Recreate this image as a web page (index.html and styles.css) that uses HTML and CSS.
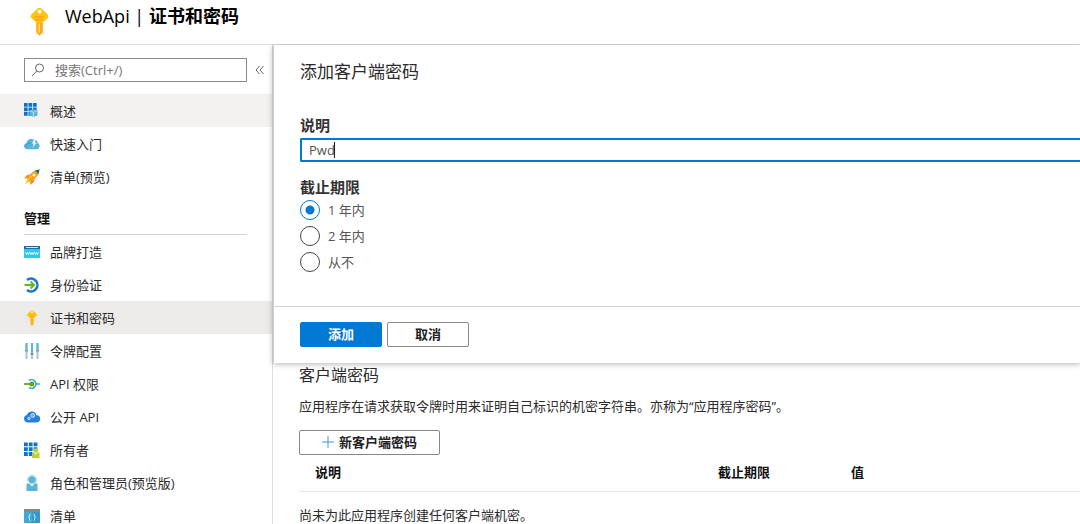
FILE: index.html
```html
<!DOCTYPE html>
<html lang="zh-CN">
	<head>
		<meta charset="utf-8">
		<title>WebApi | 证书和密码</title>
		<link rel="stylesheet" href="styles.css">
	</head>
	<body>
		<header class="header">
			<svg class="header-icon" viewBox="0 0 20 30">
				<path d="M8 1.2Q10-.4 12 1.2L18.600 7.500Q20 9.500 18.600 11.500L13.500 16V26.500L10 30 6.500 26.500V16L1.400 11.500Q0 9.500 1.400 7.500Z" fill="#ffc414"/>
				<path d="M7 16h6v10.500L10 29.500l-3-3z" fill="#ffa91c"/>
				<path d="M9 17h1.500v10H9z" fill="#ffe06a"/>
				<path d="M5 9.500h10v1.500H5zM6 12.500h8V14H6z" fill="#ff9f1c"/>
				<circle cx="10" cy="4.500" r="2" fill="#fff"/>
			</svg>
			<h1>WebApi | <b>证书和密码</b></h1>
		</header>
		<div class="layout">
			<nav class="sidebar">
				<div class="search-row">
					<div class="search">
						<svg viewBox="0 0 14 14"><circle cx="8.500" cy="5" r="4" fill="none" stroke="#666"/><path d="M5.700 8 1 13" stroke="#666"/></svg>
						<input type="text" placeholder="搜索(Ctrl+/)" aria-label="搜索">
					</div>
					<button class="collapse" aria-label="折叠">
						<svg viewBox="0 0 9 10"><path d="M4.500 1 1 5l3.500 4M8.500 1 5 5l3.500 4" fill="none" stroke="#666"/></svg>
					</button>
				</div>
				<a class="item hover" href="#">
					<svg viewBox="0 0 16 16">
						<path d="M0 0h3.700v3.700H0zM4.500 0h3.700v3.700H4.500zM9 0h3.700v3.700H9zM0 4.500h3.700v3.700H0zM4.500 4.500h3.700v3.700H4.500zM9 4.500h3.700v3.700H9zM0 9h3.700v3.700H0zM4.500 9h3.700v3.700H4.500z" fill="#0f72c9"/>
						<path d="m9.500 6 4 1.500v5l-4 1.500-4-2V7.500z" fill="#59b4d9"/>
						<path d="m6 8 3.500 1.300V14M9.500 9.300l4-1.500" fill="none" stroke="#b8e2f2"/>
					</svg>
					概述
				</a>
				<a class="item" href="#">
					<svg viewBox="0 0 16 16">
						<path d="M3.200 13.200a3.200 3.200 0 0 1-.7-6.300A4.300 4.300 0 0 1 9 3.500a3.500 3.500 0 0 1 4.500 3.500 3.200 3.200 0 0 1-.5 6.200z" fill="#59b4d9"/>
						<path d="M1.500 11.500C1 8 5 6 7.500 8.500" fill="none" stroke="#3b94bf"/>
						<path d="m10.500 3-2.500 4.500h2L8.500 12l4-5.500h-2l1.500-3.500z" fill="#fff"/>
					</svg>
					快速入门
				</a>
				<a class="item" href="#">
					<svg viewBox="0 0 16 16">
						<path d="M6.500 5.500 3 6 0 9.500l4-.5zM10.500 9.500 10 13l-4 3 .5-4z" fill="#f78d1e"/>
						<path d="M3.500 10 1 15l5-2.500z" fill="#fcd116"/>
						<path d="M11 1.500 15.500.5l-1 4.500Q12 10 6 13L3 10Q6 4 11 1.500Z" fill="#ff9c1a"/>
						<path d="M11 1.500 15.500.5l-1 4.500z" fill="#0f6a9e"/>
						<circle cx="10" cy="6" r="1.500" fill="#fff"/>
						<path d="m4 11 4-4" stroke="#ffd54a"/>
					</svg>
					清单(预览)
				</a>
				<h2 class="group">管理</h2>
				<a class="item" href="#">
					<svg viewBox="0 0 16 16">
						<path d="M0 2h16v12H0z" fill="#32c8ee"/>
						<path d="M0 2h16v3H0z" fill="#1b66b5"/>
						<path d="M2 3.500h12" stroke="#d4e8f8"/>
						<path d="m1.500 8 1 2.500 1-2 1 2 1-2.500m.5 0 1 2.500 1-2 1 2L10 8m.5 0 1 2.500 1-2 1 2 1-2.500" fill="none" stroke="#fff" stroke-width=".8"/>
					</svg>
					品牌打造
				</a>
				<a class="item" href="#">
					<svg viewBox="0 0 16 16">
						<path d="M3 3A6.400 6.400 0 1 1 3 13" fill="none" stroke="#1879cf" stroke-width="2.600"/>
						<path d="M.5 8H10M6.500 4.500 10 8l-3.500 3.500" fill="none" stroke="#66b71b" stroke-width="2"/>
					</svg>
					身份验证
				</a>
				<a class="item active" href="#">
					<svg viewBox="0 0 16 16">
						<path d="M7 .5Q8-.2 9 .5l3.500 3.200q.8 1 0 2L9.700 8.200V14L8 16l-1.700-2V8.200L3.500 5.700q-.8-1 0-2z" fill="#ffc30f"/>
						<path d="M7 8.500h2V14l-1 1-1-1z" fill="#ffae17"/>
						<path d="M5.500 5h5M6 6.800h4" stroke="#ffa51c"/>
						<circle cx="8" cy="2.300" r="1" fill="#fff"/>
					</svg>
					证书和密码
				</a>
				<a class="item" href="#">
					<svg viewBox="0 0 16 16">
						<path d="M2.500 0v16M8 0v16M13.500 0v16" stroke="#a9c6d3" stroke-width="2"/>
						<path d="M2.500 0v6M8 0v10M13.500 0v6" stroke="#59b4d9" stroke-width="2"/>
						<path d="M1 7.500h3M6.500 11h3M12 7.500h3" stroke="#8b9aa2" stroke-width="2"/>
					</svg>
					令牌配置
				</a>
				<a class="item" href="#">
					<svg viewBox="0 0 16 16">
						<path d="M5 4.500A4.300 4.300 0 1 1 5 11.500M12.500 8H16" fill="none" stroke="#3dacd6" stroke-width="1.600"/>
						<path d="M0 8h7" stroke="#7ab51d" stroke-width="2"/>
						<circle cx="7.800" cy="8" r="2.500" fill="#6ba514"/>
					</svg>
					API 权限
				</a>
				<a class="item" href="#">
					<svg viewBox="0 0 16 16">
						<path d="M3.800 13.500a3.800 3.800 0 0 1-.8-7.500A5 5 0 0 1 12.600 6.200 3.600 3.600 0 0 1 12.500 13.500z" fill="#2480dc"/>
						<circle cx="8.800" cy="6.400" r="1.900" fill="#65aaf0" stroke="#d8ebff"/>
						<circle cx="5" cy="9.400" r="1.200" fill="#4794e6" stroke="#d8ebff"/>
					</svg>
					公开 API
				</a>
				<a class="item" href="#">
					<svg viewBox="0 0 16 16">
						<path d="M0 .5h3.800v3.800H0zM4.800.5h3.800v3.800H4.800zM9.600.5h3.800v3.800H9.600zM0 5.300h3.800v3.800H0zM4.800 5.300h3.800v3.800H4.800zM9.600 5.300h3.800v3.800H9.600zM0 10.100h3.800v3.800H0zM4.800 10.100h3.800v3.800H4.800z" fill="#0f72c9"/>
						<path d="M8 10.500h7.500V16H8z" fill="#b8d432"/>
						<path d="m10 10.500 1.800 2 1.800-2z" fill="#fff"/>
						<circle cx="11.800" cy="8.500" r="2.300" fill="#b8d432"/>
					</svg>
					所有者
				</a>
				<a class="item" href="#">
					<svg viewBox="0 0 16 16">
						<path d="M2.500 8.500h11V16h-11z" fill="#59b4d9"/>
						<path d="m5.500 8.500 2.500 3 2.500-3z" fill="#fff"/>
						<circle cx="8" cy="4.800" r="3.600" fill="#59b4d9"/>
						<path d="M3.700 6V4.500a4.300 4.300 0 0 1 8.600 0V6q0 2-3 2" fill="none" stroke="#8acbe4"/>
					</svg>
					角色和管理员(预览版)
				</a>
				<a class="item" href="#">
					<svg viewBox="0 0 16 16">
						<path d="M0 1h16v14H0z" fill="#3fa9d2"/>
						<path d="M8 4h8v11H8z" fill="#3799c7"/>
						<path d="M0 1h16v3H0z" fill="#7a8b94"/>
						<path d="M6.500 6Q5 6 5.500 8q0 1-1 1.200 1 .2 1 1.300-.5 2 1 2M9.500 6q1.500 0 1 2 0 1 1 1.200-1 .2-1 1.300.5 2-1 2" fill="none" stroke="#d8f1fb" stroke-width=".9"/>
					</svg>
					清单
				</a>
			</nav>
			<main class="content">
				<form class="pane">
					<div class="pane-body">
						<h2>添加客户端密码</h2>
						<label class="label" for="desc">说明</label>
						<div class="field">
							<input type="text" id="desc" value="Pwd">
							<span class="caret"></span>
						</div>
						<fieldset>
							<legend class="label">截止期限</legend>
							<label class="radio"><input type="radio" name="expires" checked>1 年内</label>
							<label class="radio"><input type="radio" name="expires">2 年内</label>
							<label class="radio"><input type="radio" name="expires">从不</label>
						</fieldset>
					</div>
					<div class="pane-footer">
						<button type="button" class="btn primary">添加</button>
						<button type="button" class="btn">取消</button>
					</div>
				</form>
				<section class="secrets">
					<h2>客户端密码</h2>
					<p>应用程序在请求获取令牌时用来证明自己标识的机密字符串。亦称为“应用程序密码”。</p>
					<button type="button" class="btn add">
						<svg viewBox="0 0 12 12"><path d="M6 0v12M0 6h12" stroke="#3a9fd0"/></svg>
						新客户端密码
					</button>
					<table>
						<thead>
							<tr><th class="col-desc">说明</th><th class="col-expires">截止期限</th><th>值</th></tr>
						</thead>
						<tbody>
							<tr><td colspan="3">尚未为此应用程序创建任何客户端机密。</td></tr>
						</tbody>
					</table>
				</section>
			</main>
		</div>
	</body>
</html>
```
FILE: styles.css
```css
*{
	margin: 0;
	padding: 0;
	box-sizing: border-box;
}
body{
	display: flex;
	flex-direction: column;
	height: 100vh;
	overflow: hidden;
	background-color: #fff;
	color: #2b2b2b;
	font: 13px/20px "Open Sans", "Noto Sans CJK SC", sans-serif;
}
button, input{
	font: inherit;
	color: inherit;
}
h2{
	font-size: 16px;
	font-weight: normal;
	line-height: 24px;
}
.header{
	display: flex;
	align-items: flex-start;
	flex-shrink: 0;
	height: 45px;
	padding: 7px 30px 0;
	border-bottom: 1px solid #dedede;
}
.header-icon{
	width: 19px;
	height: 29px;
	margin-right: 16px;
}
.header h1{
	color: #000;
	font-size: 18px;
	font-weight: normal;
	line-height: 18px;
}
.layout{
	display: flex;
	flex: 1;
	min-height: 0;
}

/* sidebar */
.sidebar{
	flex: none;
	width: 273px;
	border-right: 1px solid #dedede;
}
.search-row{
	display: flex;
	align-items: center;
	padding: 13px 8px 12px 24px;
}
.search{
	display: flex;
	align-items: center;
	width: 223px;
	height: 24px;
	padding-left: 6px;
	border: 1px solid #8a8a8a;
}
.search svg{
	width: 14px;
	height: 14px;
	margin-right: 10px;
}
.search input{
	flex: 1;
	min-width: 0;
	border: 0;
	outline: 0;
	background: none;
}
.search input::placeholder{
	color: #767676;
}
.collapse{
	display: flex;
	margin-left: 8px;
	border: 0;
	background: none;
}
.collapse svg{
	width: 9px;
	height: 10px;
}
.item{
	display: flex;
	align-items: center;
	gap: 10px;
	height: 33px;
	padding-left: 24px;
	color: #2b2b2b;
	text-decoration: none;
}
.item svg{
	width: 16px;
	height: 16px;
}
.item.hover{
	background-color: #f3f2f1;
}
.item.active{
	background-color: #edebe9;
}
.group{
	height: 42px;
	margin: 0 25px 0 24px;
	padding-top: 13px;
	border-bottom: 1px solid #d4d4d4;
	color: #111;
	font-size: 13px;
	font-weight: bold;
}

/* add secret pane */
.content{
	flex: 1;
	min-width: 0;
}
.pane{
	position: relative;
	background-color: #fff;
	border-left: 1px solid #d0d0d0;
	box-shadow: 0 1px 6px rgba(0, 0, 0, .3);
	clip-path: inset(-1px 0 -10px -10px);
}
.pane-body{
	padding: 15px 0 34px 26px;
}
.pane-body h2{
	margin-bottom: 31px;
	font-size: 17px;
}
.label{
	display: block;
	margin-bottom: 3px;
	color: #333;
	font-size: 15px;
	font-weight: bold;
}
.field{
	position: relative;
}
.field input{
	display: block;
	width: 100%;
	height: 24px;
	padding-left: 7px;
	border: 2px solid #0078d4;
	border-right: 0;
	border-radius: 2px 0 0 2px;
	outline: 0;
	color: #555;
}
.caret{
	position: absolute;
	top: 4px;
	left: 34px;
	width: 1px;
	height: 16px;
	background-color: #222;
}
fieldset{
	margin-top: 15px;
	border: 0;
}
.radio{
	display: flex;
	align-items: center;
	gap: 8px;
	margin-bottom: 6px;
	color: #555;
}
.radio:last-child{
	margin-bottom: 0;
}
.radio input{
	appearance: none;
	width: 20px;
	height: 20px;
	border: 1px solid #444;
	border-radius: 50%;
}
.radio input:checked{
	border-color: #0078d4;
	background: radial-gradient(circle, #0078d4 4px, #fff 5px);
}
.pane-footer{
	display: flex;
	gap: 5px;
	padding: 15px 0 16px 26px;
	border-top: 1px solid #d4d4d4;
}
.btn{
	width: 82px;
	height: 25px;
	padding-bottom: 2px;
	border: 1px solid #8a8886;
	border-radius: 2px;
	background-color: #fff;
	color: #222;
	font-weight: 600;
	line-height: 20px;
}
.btn.primary{
	border-color: #0078d4;
	background-color: #0078d4;
	color: #fff;
}

/* secrets list */
.secrets{
	padding-left: 26px;
}
.secrets p{
	margin: 9px 0 14px;
}
.btn.add{
	display: flex;
	align-items: center;
	justify-content: center;
	gap: 5px;
	width: 141px;
}
.btn.add svg{
	width: 12px;
	height: 12px;
}
table{
	width: 100%;
	table-layout: fixed;
	border-collapse: collapse;
}
th{
	height: 36px;
	padding: 0 0 2px 16px;
	border-bottom: 1px solid #e8e8e8;
	color: #111;
	text-align: left;
}
td{
	padding: 13px 0;
}
.col-desc{
	width: 403px;
}
.col-expires{
	width: 133px;
}
```
